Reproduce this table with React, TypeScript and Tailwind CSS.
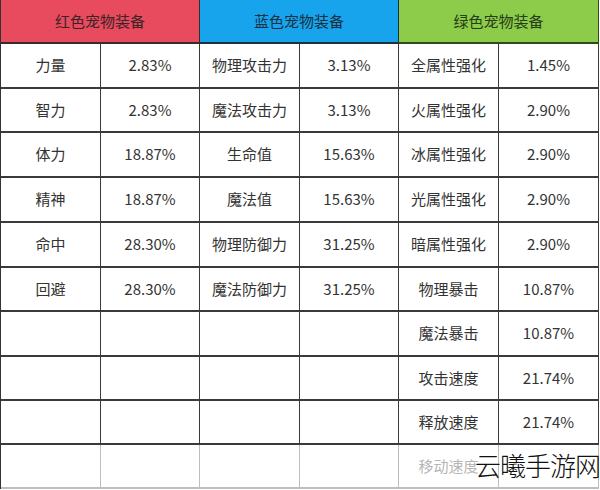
const RED = [
  ["力量", "2.83%"],
  ["智力", "2.83%"],
  ["体力", "18.87%"],
  ["精神", "18.87%"],
  ["命中", "28.30%"],
  ["回避", "28.30%"],
];

const BLUE = [
  ["物理攻击力", "3.13%"],
  ["魔法攻击力", "3.13%"],
  ["生命值", "15.63%"],
  ["魔法值", "15.63%"],
  ["物理防御力", "31.25%"],
  ["魔法防御力", "31.25%"],
];

const GREEN = [
  ["全属性强化", "1.45%"],
  ["火属性强化", "2.90%"],
  ["冰属性强化", "2.90%"],
  ["光属性强化", "2.90%"],
  ["暗属性强化", "2.90%"],
  ["物理暴击", "10.87%"],
  ["魔法暴击", "10.87%"],
  ["攻击速度", "21.74%"],
  ["释放速度", "21.74%"],
  ["移动速度", ""],
];

const ROW_H = ["h-[45px]", "h-[44px]", "h-[45px]", "h-[45px]", "h-[45px]", "h-[44px]", "h-[45px]", "h-[44px]", "h-[44px]", "h-[44px]"];

const FONT = { fontFamily: '"Noto Sans CJK SC", "Noto Sans", sans-serif' };

export default function App() {
  return (
    <div className="relative w-[600px] h-[490px] bg-white overflow-hidden" style={FONT}>
      <div className="grid grid-cols-[100px_99px_100px_99px_100px_100px] border-l border-[#333] w-[599px]">
        {/* header */}
        <div className="col-span-2 h-[44px] bg-[#e84a5e] border-r border-b-2 border-[#3a2a2a] flex items-center justify-center text-[15px] text-[#3b2326]">
          红色宠物装备
        </div>
        <div className="col-span-2 h-[44px] bg-[#18a4ec] border-r border-b-2 border-[#1d3140] flex items-center justify-center text-[15px] text-[#15303f]">
          蓝色宠物装备
        </div>
        <div className="col-span-2 h-[44px] bg-[#8dcb4a] border-r border-b-2 border-[#2f4a1e] flex items-center justify-center text-[15px] text-[#263d17]">
          绿色宠物装备
        </div>

        {ROW_H.map((h, i) => {
          const last = i === ROW_H.length - 1;
          const line = last ? "border-[#bdbdbd]" : "border-[#3a3a3a]";
          const cell = `${h} ${line} border-r border-b-2 flex items-center justify-center text-[15px] text-[#333]`;
          const r = RED[i];
          const b = BLUE[i];
          const g = GREEN[i];
          return [
            <div key={`r${i}a`} className={cell}>{r ? r[0] : ""}</div>,
            <div key={`r${i}b`} className={cell}>{r ? r[1] : ""}</div>,
            <div key={`b${i}a`} className={cell}>{b ? b[0] : ""}</div>,
            <div key={`b${i}b`} className={cell}>{b ? b[1] : ""}</div>,
            <div key={`g${i}a`} className={`${cell} ${last ? "text-[#b5b5b5] text-[14px]" : ""}`}>{g[0]}</div>,
            <div key={`g${i}b`} className={cell}>{g[1]}</div>,
          ];
        })}
      </div>

      {/* watermark */}
      <div className="absolute left-[475px] top-[452px] text-[26px] font-extralight text-[#111] leading-none tracking-[-1px]">
        云曦手游网
      </div>
    </div>
  );
}
